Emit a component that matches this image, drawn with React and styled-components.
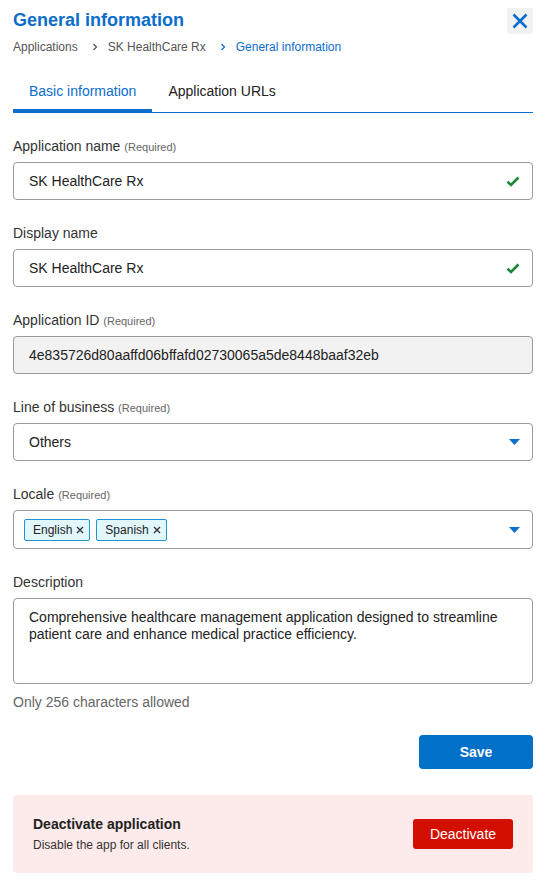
import React from "react";
import styled, { createGlobalStyle } from "styled-components";

const Global = createGlobalStyle`
  html, body { margin: 0; padding: 0; background: #fff; }
  body { font-family: "Liberation Sans", Arial, sans-serif; color: #222; }
  * { box-sizing: border-box; }
`;

const Panel = styled.div`
  width: 546px;
  padding: 8px 13px 18px;
`;

const Header = styled.div`
  display: flex;
  justify-content: space-between;
  align-items: flex-start;
`;

const Title = styled.h1`
  margin: 0;
  font-size: 18px;
  line-height: 24px;
  font-weight: 700;
  color: #0b6dcc;
`;

const CloseButton = styled.button`
  width: 26px;
  height: 26px;
  border: 0;
  border-radius: 2px;
  background: #f2f2f2;
  display: flex;
  align-items: center;
  justify-content: center;
  padding: 0;
`;

const Crumbs = styled.nav`
  display: flex;
  align-items: center;
  height: 16px;
  margin-top: 5px;
  font-size: 12px;
  line-height: 16px;
  color: #555;
`;

const Crumb = styled.span`
  color: ${(p) => (p.$current ? "#0b6dcc" : "#555")};
`;

const Sep = styled.span`
  display: inline-flex;
  margin: 0 10px 0 14px;
`;

const Tabs = styled.div`
  display: flex;
  margin-top: 19px;
  border-bottom: 1px solid #0b6dcc;
`;

const Tab = styled.div`
  padding: 9px 16px 9px;
  font-size: 14px;
  line-height: 17px;
  color: ${(p) => (p.$active ? "#0b6dcc" : "#222")};
  border-bottom: 3px solid ${(p) => (p.$active ? "#0b6dcc" : "transparent")};
`;

const Form = styled.div`
  display: flex;
  flex-direction: column;
  padding-top: 25px;
`;

const Field = styled.div`
  display: flex;
  flex-direction: column;
  gap: 7px;
  margin-bottom: ${(p) => p.$mb ?? 25}px;
`;

const Label = styled.label`
  display: block;
  height: 17px;
  font-size: 14px;
  line-height: 17px;
  color: #333;
`;

const Req = styled.span`
  font-size: 11px;
  line-height: 1;
  color: #666;
`;

const Box = styled.div`
  display: flex;
  align-items: center;
  justify-content: space-between;
  height: ${(p) => p.$h ?? 38}px;
  padding: 0 12px 0 ${(p) => p.$pl ?? 15}px;
  border: 1px solid #9a9a9a;
  border-radius: 4px;
  background: ${(p) => (p.$disabled ? "#f2f2f2" : "#fff")};
  font-size: 14px;
  color: #222;
`;

const Tags = styled.div`
  display: flex;
  gap: 6px;
`;

const Tag = styled.span`
  display: inline-flex;
  align-items: center;
  gap: 4px;
  height: 22px;
  padding: 0 5px 0 8px;
  background: #e1f6fd;
  border: 1px solid #1e94d6;
  border-radius: 2px;
  font-size: 12px;
  color: #222;
`;

const TextArea = styled.div`
  height: 86px;
  padding: 10px 15px;
  border: 1px solid #9a9a9a;
  border-radius: 4px;
  font-size: 14px;
  line-height: 17px;
  color: #222;
`;

const Help = styled.div`
  margin-top: 10px;
  font-size: 14px;
  line-height: 17px;
  color: #666;
`;

const Actions = styled.div`
  display: flex;
  justify-content: flex-end;
  margin-top: 24px;
`;

const SaveButton = styled.button`
  width: 114px;
  height: 34px;
  border: 0;
  border-radius: 4px;
  background: #0070c9;
  color: #fff;
  font-family: inherit;
  font-size: 14px;
  font-weight: 700;
`;

const Danger = styled.div`
  display: flex;
  align-items: center;
  justify-content: space-between;
  height: 78px;
  margin-top: 26px;
  padding: 0 20px;
  background: #fdeaea;
  border-radius: 4px;
`;

const DangerTitle = styled.div`
  font-size: 14px;
  font-weight: 700;
  line-height: 17px;
  color: #222;
`;

const DangerText = styled.div`
  margin-top: 5px;
  font-size: 12px;
  line-height: 15px;
  color: #333;
`;

const DeactivateButton = styled.button`
  width: 100px;
  height: 30px;
  border: 0;
  border-radius: 3px;
  background: #d20f00;
  color: #fff;
  font-family: inherit;
  font-size: 14px;
`;

const Check = () => (
  <svg width="14" height="11" viewBox="0 0 14 11">
    <path d="M1.5 5.8 L5 9 L12.5 1.5" fill="none" stroke="#1a8a3a" strokeWidth="2.6" />
  </svg>
);

const Caret = () => (
  <svg width="11" height="6" viewBox="0 0 11 6">
    <path d="M0 0 H11 L5.5 6 Z" fill="#0b6dcc" />
  </svg>
);

const Chevron = ({ color }) => (
  <svg width="6" height="8" viewBox="0 0 6 8">
    <path d="M1.5 1 L4.5 4 L1.5 7" fill="none" stroke={color} strokeWidth="1.3" />
  </svg>
);

const SmallX = () => (
  <svg width="8" height="8" viewBox="0 0 8 8">
    <path d="M1 1 L7 7 M7 1 L1 7" stroke="#333" strokeWidth="1.4" />
  </svg>
);

export default function App() {
  return (
    <>
      <Global />
      <Panel>
        <Header>
          <Title>General information</Title>
          <CloseButton aria-label="Close">
            <svg width="16" height="16" viewBox="0 0 16 16">
              <path d="M1.5 1.5 L14.5 14.5 M14.5 1.5 L1.5 14.5" stroke="#0b6dcc" strokeWidth="2.6" />
            </svg>
          </CloseButton>
        </Header>
        <Crumbs>
          <Crumb>Applications</Crumb>
          <Sep><Chevron color="#555" /></Sep>
          <Crumb>SK HealthCare Rx</Crumb>
          <Sep><Chevron color="#0b6dcc" /></Sep>
          <Crumb $current>General information</Crumb>
        </Crumbs>
        <Tabs>
          <Tab $active>Basic information</Tab>
          <Tab>Application URLs</Tab>
        </Tabs>
        <Form>
          <Field>
            <Label>Application name <Req>(Required)</Req></Label>
            <Box>SK HealthCare Rx<Check /></Box>
          </Field>
          <Field>
            <Label>Display name</Label>
            <Box>SK HealthCare Rx<Check /></Box>
          </Field>
          <Field>
            <Label>Application ID <Req>(Required)</Req></Label>
            <Box $disabled>4e835726d80aaffd06bffafd02730065a5de8448baaf32eb</Box>
          </Field>
          <Field>
            <Label>Line of business <Req>(Required)</Req></Label>
            <Box>Others<Caret /></Box>
          </Field>
          <Field>
            <Label>Locale <Req>(Required)</Req></Label>
            <Box $h={39} $pl={10}>
              <Tags>
                <Tag>English<SmallX /></Tag>
                <Tag>Spanish<SmallX /></Tag>
              </Tags>
              <Caret />
            </Box>
          </Field>
          <Field $mb={0}>
            <Label>Description</Label>
            <TextArea>
              Comprehensive healthcare management application designed to streamline
              patient care and enhance medical practice efficiency.
            </TextArea>
          </Field>
          <Help>Only 256 characters allowed</Help>
          <Actions>
            <SaveButton>Save</SaveButton>
          </Actions>
          <Danger>
            <div>
              <DangerTitle>Deactivate application</DangerTitle>
              <DangerText>Disable the app for all clients.</DangerText>
            </div>
            <DeactivateButton>Deactivate</DeactivateButton>
          </Danger>
        </Form>
      </Panel>
    </>
  );
}
